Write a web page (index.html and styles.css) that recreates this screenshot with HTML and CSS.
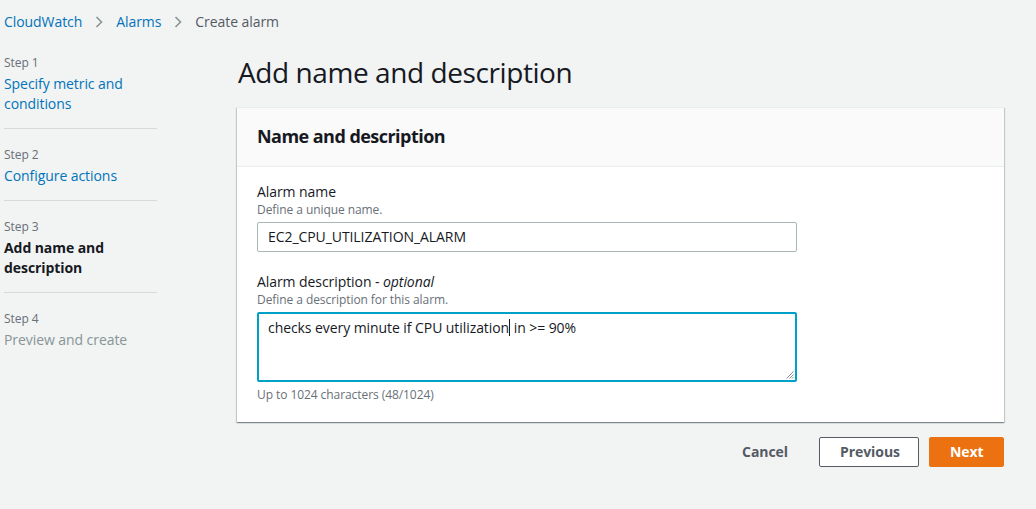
FILE: index.html
```html
<!DOCTYPE html>
<html lang="en">
<head>
<meta charset="utf-8">
<title>Create alarm</title>
<link rel="stylesheet" href="styles.css">
</head>
<body>
<nav class="crumbs">
  <a class="crumb-link" href="#">CloudWatch</a>
  <svg class="chev" width="8" height="12" viewBox="0 0 8 12"><polyline points="1.5,1 6.5,6 1.5,11" fill="none" stroke="#879596" stroke-width="1.6"/></svg>
  <a class="crumb-link" href="#">Alarms</a>
  <svg class="chev" width="8" height="12" viewBox="0 0 8 12"><polyline points="1.5,1 6.5,6 1.5,11" fill="none" stroke="#879596" stroke-width="1.6"/></svg>
  <span class="crumb-current">Create alarm</span>
</nav>

<div class="layout">
  <ul class="steps">
    <li class="step">
      <div class="step-label">Step 1</div>
      <a class="step-link" href="#">Specify metric and conditions</a>
    </li>
    <li class="step">
      <div class="step-label">Step 2</div>
      <a class="step-link" href="#">Configure actions</a>
    </li>
    <li class="step">
      <div class="step-label">Step 3</div>
      <span class="step-current">Add name and description</span>
    </li>
    <li class="step">
      <div class="step-label">Step 4</div>
      <span class="step-disabled">Preview and create</span>
    </li>
  </ul>

  <main class="main">
    <h1 class="page-title">Add name and description</h1>
    <section class="panel">
      <header class="panel-header">
        <h2 class="panel-title">Name and description</h2>
      </header>
      <div class="panel-body">
        <div class="field">
          <div class="field-label">Alarm name</div>
          <div class="field-desc">Define a unique name.</div>
          <div class="input">EC2_CPU_UTILIZATION_ALARM</div>
        </div>
        <div class="field field-gap">
          <div class="field-label">Alarm description - <i>optional</i></div>
          <div class="field-desc">Define a description for this alarm.</div>
          <div class="textarea">checks every minute if CPU utilization<span class="caret"></span> in &gt;= 90%
            <svg class="grip" width="9" height="9" viewBox="0 0 9 9"><path d="M8.5 1.5 L1.5 8.5 M8.5 4.5 L4.5 8.5 M8.5 7 L7 8.5" stroke="#687078" stroke-width="0.8" fill="none"/></svg>
          </div>
          <div class="field-constraint">Up to 1024 characters (48/1024)</div>
        </div>
      </div>
    </section>
    <div class="actions">
      <button class="btn btn-link">Cancel</button>
      <button class="btn btn-normal">Previous</button>
      <button class="btn btn-primary">Next</button>
    </div>
  </main>
</div>
</body>
</html>
```

FILE: styles.css
```css
* { box-sizing: border-box; }
html, body {
  margin: 0;
  padding: 0;
  background: #f2f3f3;
  font-family: "Open Sans", "Noto Sans", sans-serif;
  color: #16191f;
  font-size: 14px;
  letter-spacing: -0.005em;
}
a { text-decoration: none; }

.crumbs {
  display: flex;
  align-items: center;
  padding: 12px 0 0 4px;
  height: 32px;
  line-height: 20px;
}
.crumb-link { color: #0073bb; }
.crumb-current { color: #545b64; }
.chev { margin: 0 13px 0 13px; }

.layout {
  display: flex;
  padding: 22px 32px 0 4px;
  gap: 80px;
}

.steps {
  list-style: none;
  margin: 0;
  padding: 1px 0 0;
  width: 153px;
  flex-shrink: 0;
}
.step {
  padding: 18px 0 14px;
  border-bottom: 1px solid #d5dbdb;
}
.step:first-child { padding-top: 0; }
.step:last-child { border-bottom: none; }
.step-label {
  font-size: 12px;
  line-height: 16px;
  color: #687078;
  margin-bottom: 3px;
}
.step-link, .step-current, .step-disabled {
  display: block;
  line-height: 20px;
}
.step-link { color: #0073bb; }
.step-current { font-weight: 700; color: #16191f; }
.step-disabled { color: #879596; }

.main { flex: 1; }
.page-title {
  margin: 0 0 17px 1px;
  font-size: 28px;
  line-height: 36px;
  font-weight: 400;
  letter-spacing: -0.015em;
}
.panel {
  background: #fff;
  border-top: 1px solid #eaeded;
  box-shadow: 0 1px 1px 0 rgba(0,28,36,0.3), 1px 1px 1px 0 rgba(0,28,36,0.15), -1px 1px 1px 0 rgba(0,28,36,0.15);
}
.panel-header {
  background: #fafafa;
  border-bottom: 1px solid #eaeded;
  padding: 17px 20px 19px;
}
.panel-title {
  margin: 0;
  font-size: 18px;
  line-height: 22px;
  font-weight: 700;
  letter-spacing: -0.03em;
}
.panel-body { padding: 15px 207px 19px 20px; }
.field-label { line-height: 20px; }
.field-desc {
  font-size: 12px;
  line-height: 16px;
  color: #687078;
  margin-bottom: 4px;
}
.field-gap { margin-top: 20px; }
.input {
  height: 30px;
  border: 1px solid #aab7b8;
  border-radius: 2px;
  padding: 4px 10px;
  line-height: 20px;
}
.textarea {
  position: relative;
  height: 70px;
  border: 2px solid #00a1c9;
  border-radius: 2px;
  padding: 3px 9px;
  line-height: 22px;
}
.caret {
  display: inline-block;
  width: 1px;
  height: 17px;
  background: #16191f;
  vertical-align: -3px;
}
.grip {
  position: absolute;
  right: 1px;
  bottom: 1px;
}
.field-constraint {
  margin-top: 5px;
  font-size: 12px;
  line-height: 16px;
  color: #687078;
}

.actions {
  display: flex;
  justify-content: flex-end;
  gap: 10px;
  margin-top: 15px;
}
.btn {
  font-family: inherit;
  letter-spacing: inherit;
  font-size: 14px;
  font-weight: 700;
  height: 30px;
  line-height: 20px;
  border-radius: 2px;
  padding: 4px 20px;
  cursor: pointer;
}
.btn-link {
  background: transparent;
  border: 1px solid transparent;
  color: #545b64;
}
.btn-normal {
  background: #fff;
  border: 1px solid #545b64;
  color: #545b64;
  width: 100px;
}
.btn-primary {
  background: #ec7211;
  border: 1px solid #ec7211;
  color: #fff;
  width: 75px;
}
```
